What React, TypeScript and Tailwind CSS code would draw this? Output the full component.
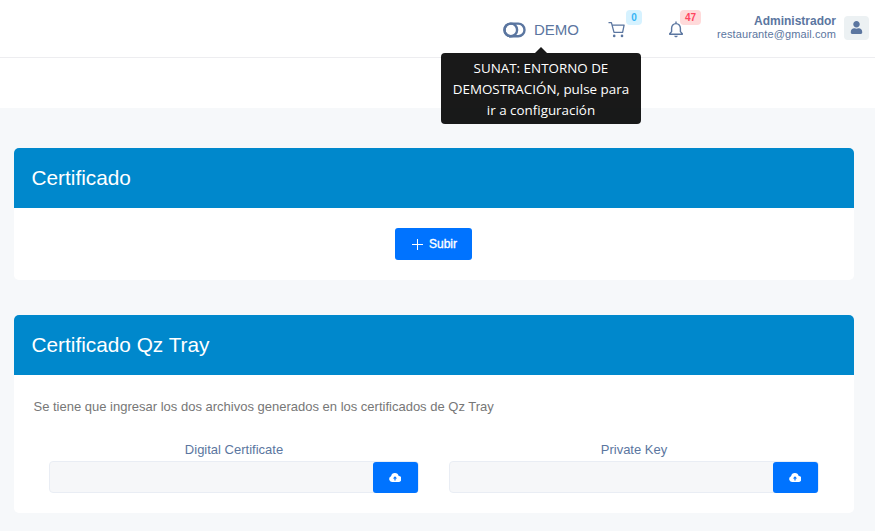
import type { ReactNode } from "react";
import { FaUser } from "react-icons/fa";

function ToggleIcon() {
  return (
    <svg className="h-[16px] w-[23px]" viewBox="0 0 23 16" fill="none" stroke="currentColor">
      <rect x="1.5" y="1.6" width="20" height="12.6" rx="6.3" strokeWidth="2.4" />
      <circle cx="7.8" cy="7.9" r="6.3" strokeWidth="2.4" />
    </svg>
  );
}

function CartIcon() {
  return (
    <svg className="size-[19px]" viewBox="0 0 19 19" fill="none" stroke="currentColor" strokeWidth="1.3">
      <path d="M0.5 2.6h2.9l2.6 9.8h8.6l1.5-7.2H4.2" strokeLinejoin="round" />
      <circle cx="6.2" cy="15.9" r="1.3" fill="currentColor" stroke="none" />
      <circle cx="14" cy="15.9" r="1.3" fill="currentColor" stroke="none" />
    </svg>
  );
}

function BellIcon() {
  return (
    <svg className="size-[19px]" viewBox="0 0 19 19" fill="none" stroke="currentColor" strokeWidth="1.4" strokeLinejoin="round">
      <path d="M9 1.6v2M9 3.6c-2.7 0-4.4 2-4.4 4.6v3.4l-1.9 2.2v0.5h12.6v-0.5l-1.9-2.2V8.200c0-2.600-1.700-4.600-4.400-4.600z" />
      <path d="M7.200 15.800h3.600c-0.300 1-1 1.500-1.800 1.500s-1.500-0.500-1.800-1.500z" fill="currentColor" stroke="none" />
    </svg>
  );
}

function CloudUploadIcon() {
  return (
    <svg className="mt-[-1px] mr-[1px] h-[9px] w-[12px]" viewBox="0 0 12 9">
      <path d="M3 9a3 3 0 0 1-.9-5.800A3.900 3.900 0 0 1 9.700 3 3 3 0 0 1 9.200 9z" fill="currentColor" />
      <path d="M6 3.200 3.900 5.500h1.500v1.900h1.200V5.500h1.500z" fill="#0073ff" />
    </svg>
  );
}

function Header() {
  return (
    <header className="flex h-[58px] items-start justify-end border-b border-[#ededf0] bg-white pr-[6px] text-[#5b76a0]">
      <div className="relative mt-[21px] flex h-[18px] w-[76px] items-center gap-[8px]">
        <ToggleIcon />
        <span className="text-[15px] leading-[18px] tracking-[-0.05px]">DEMO</span>
        <div className="absolute top-[32px] left-[-62px] z-10 h-[71px] w-[200px] rounded-[4px] bg-black/90 pt-[5px] text-center font-['Open_Sans',sans-serif] text-[13.4px] leading-[21px] whitespace-nowrap text-white">
          <svg className="absolute -top-[6px] left-[94px] h-[6px] w-[12px]" viewBox="0 0 12 6">
            <path d="M0 6 6 0l6 6z" fill="#191919" />
          </svg>
          SUNAT: ENTORNO DE
          <br />
          DEMOSTRACIÓN, pulse para
          <br />
          ir a configuración
        </div>
      </div>
      <div className="relative mt-[20px] ml-[29px] size-[19px]">
        <CartIcon />
        <span className="absolute top-[-10px] left-[18px] flex h-[15px] w-[16px] items-center justify-center rounded-[4px] bg-[#d6f2ff] text-[10px] font-bold text-[#36b5f5]">0</span>
      </div>
      <div className="relative mt-[20px] ml-[40px] size-[19px]">
        <BellIcon />
        <span className="absolute top-[-10px] left-[13px] flex h-[15px] w-[21px] items-center justify-center rounded-[4px] bg-[#ffdada] text-[10px] font-bold text-[#ff4560]">47</span>
      </div>
      <div className="mt-[14px] ml-[31px] text-right whitespace-nowrap">
        <div className="text-[12px] leading-[14px] font-bold">Administrador</div>
        <div className="text-[11px] leading-[13px] tracking-[0.1px]">restaurante@gmail.com</div>
      </div>
      <div className="mt-[16px] ml-[8px] flex h-[24px] w-[25px] items-center justify-center rounded-[4px] bg-[#ecf1f3] pb-[1px]">
        <FaUser className="size-[13px]" />
      </div>
    </header>
  );
}

function Card({ title, children }: { title: string; children: ReactNode }) {
  return (
    <section className="overflow-hidden rounded-[5px] bg-white">
      <h2 className="flex h-[60px] items-center bg-[#0088cc] pl-[17.5px] text-[20.8px] text-white">{title}</h2>
      {children}
    </section>
  );
}

function FileField({ label }: { label: string }) {
  return (
    <div className="w-[370px]">
      <div className="h-[19px] text-center text-[13px] leading-[15px] text-[#5b76a0]">{label}</div>
      <div className="flex h-[32px] justify-end rounded-[4px] border border-[#e9edf4] bg-[#f6f7f9]">
        <button className="flex h-[31px] w-[45px] items-center justify-center rounded-[3px] bg-[#0073ff] text-white">
          <CloudUploadIcon />
        </button>
      </div>
    </div>
  );
}

export default function App() {
  return (
    <div className="h-[531px] overflow-hidden bg-[#f6f8fa] font-['Liberation_Sans',Arial,sans-serif]">
      <Header />
      <div className="h-[50px] bg-white" />
      <main className="flex flex-col gap-[35px] pt-[40px] pr-[21px] pl-[14px]">
        <Card title="Certificado">
          <div className="flex h-[72px] items-center justify-center pr-[1px]">
            <button className="flex h-[32px] w-[77px] items-center justify-center gap-[6px] rounded-[3px] bg-[#0073ff] pl-[2px] text-[12px] text-white [-webkit-text-stroke:0.35px_white]">
              <svg className="size-[11px]" viewBox="0 0 11 11" stroke="currentColor" strokeWidth="1">
                <path d="M5.5 0v11M0 5.5h11" />
              </svg>
              Subir
            </button>
          </div>
        </Card>
        <Card title="Certificado Qz Tray">
          <div className="h-[138px] pt-[24px]">
            <p className="pl-[19.5px] text-[13px] leading-[16px] text-[#777]">
              Se tiene que ingresar los dos archivos generados en los certificados de Qz Tray
            </p>
            <div className="mt-[27px] flex gap-[30px] pl-[35px]">
              <FileField label="Digital Certificate" />
              <FileField label="Private Key" />
            </div>
          </div>
        </Card>
      </main>
    </div>
  );
}
